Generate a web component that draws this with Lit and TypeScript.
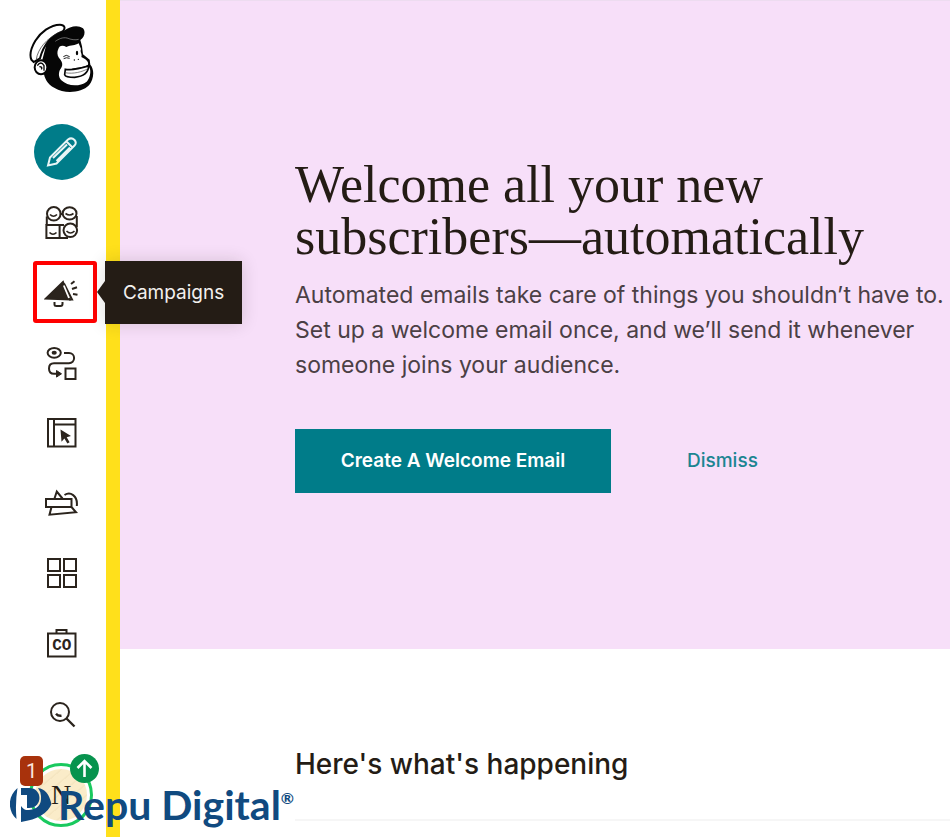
import { LitElement, html, svg, css, type TemplateResult } from "lit";
import { customElement, property, state } from "lit/decorators.js";
import { classMap } from "lit/directives/class-map.js";

interface NavEntry {
  id: string;
  label: string;
  icon: TemplateResult;
}

const entries: NavEntry[] = [
  {
    id: "audience",
    label: "Audience",
    icon: svg`
      <path d="M2.8 11.5V20M32.8 11V22M15.5 33H24M15.8 9H18.5M15.500 20H20" />
      <circle cx="9.8" cy="8.8" r="6.8" />
      <ellipse cx="25.6" cy="8.4" rx="6.9" ry="6.1" />
      <rect x="2.4" y="20" width="13.2" height="13" />
      <circle cx="26.3" cy="25.3" r="6.8" />
      <path d="M6 9.5q3.500 3.500 7 0M21.500 8.500q4 3 8 0M5.500 27.500q3.500 3.500 7 0M22.500 26q4 4 8 0" stroke-width="1.600" />`,
  },
  {
    id: "campaigns",
    label: "Campaigns",
    icon: svg`
      <path d="M2 23.500 19 7l6.500 17.500z" fill="currentColor" />
      <path d="M20 8.500 28 24.500H25" />
      <path d="M19.800 10.500 25 23" stroke="#fff" stroke-width="1.800" />
      <path d="M27 9l3.500-2.800M28 14l5-1.800M29 19l4.500.800M10.500 27v2.500q0 1.500 2 1.500h4q2 0 2-2V27" />`,
  },
  {
    id: "journeys",
    label: "Automations",
    icon: svg`
      <ellipse cx="10.200" cy="7.800" rx="6.600" ry="4.900" />
      <ellipse cx="10.200" cy="7.800" rx="1.600" ry="1" />
      <path d="M20 8H25a5 5 0 0 1 0 10.200H10q-5 0-5 5.300t5 5.300h4" />
      <path d="M12.500 25.500l5 3.300-5 3.300z" fill="currentColor" stroke-width="1" />
      <rect x="21.500" y="23.500" width="10" height="10.500" />`,
  },
  {
    id: "website",
    label: "Website",
    icon: svg`
      <path d="M4 4H31.500V31.500H4zM10 4V31.500M10 9.500H31.500" />
      <path d="M16.500 14.500l10.500 6.500-4.300 1.200 2.900 5-2.200 1.300-3-5-2.900 3.300z" fill="currentColor" stroke="none" />`,
  },
  {
    id: "content",
    label: "Content Studio",
    icon: svg`
      <path d="M2 14H27.500V22H2zM7.500 22 5.500 29.700 32 27.300 27.500 22M10.500 13.500 12.800 6.500 18.500 13.500M20.500 10C26 6.500 34 10 32.800 21" />`,
  },
  {
    id: "integrations",
    label: "Integrations",
    icon: svg`
      <path d="M4 4H16V16H4zM20 4H32V16H20zM4 20H16V32H4zM20 20H32V32H20z" />`,
  },
  {
    id: "co",
    label: "Mailchimp & Co",
    icon: svg`
      <path d="M4 8.500H31.500V31.500H4zM12.500 8.500V5H22.500V8.500" />
      <text class="co" x="17.800" y="25" text-anchor="middle">CO</text>`,
  },
  {
    id: "search",
    label: "Search",
    icon: svg`
      <circle cx="16" cy="17" r="9" />
      <path d="M22.500 23.500 30.500 31.500M12 18.700q2 2.500 5.500 2" stroke-width="2.400" />`,
  },
];

@customElement("nav-item")
class NavItem extends LitElement {
  @property({ attribute: false }) entry!: NavEntry;
  @property({ type: Boolean }) current = false;

  static styles = css`
    :host {
      display: flex;
      justify-content: center;
      position: relative;
    }
    .item {
      display: grid;
      place-items: center;
      box-sizing: border-box;
      width: 64px;
      height: 62px;
      margin: 4px 0;
      padding: 2px 6px 0 0;
      border: 4px solid transparent;
      border-radius: 3px;
      background: none;
      color: #2b241d;
      cursor: pointer;
    }
    .current {
      border-color: #ff0000;
    }
    .icon {
      display: block;
      width: 36px;
      height: 36px;
      fill: none;
      stroke: currentColor;
      stroke-width: 2;
    }
    .co {
      font: bold 16px "Liberation Mono", monospace;
      fill: currentColor;
      stroke: none;
    }
    .tip {
      position: absolute;
      z-index: 2;
      left: 105px;
      top: 4px;
      padding: 0 18px;
      background: #241c15;
      color: #f3f0ee;
      font: 19px/63px Inter, sans-serif;
      box-shadow: 0 0 16px rgba(36, 28, 21, 0.16);
    }
    .tip::before {
      content: "";
      position: absolute;
      left: -8px;
      top: 20px;
      border: solid transparent;
      border-width: 11px 8px 11px 0;
      border-right-color: #241c15;
    }
  `;

  render() {
    const { label, icon } = this.entry;
    return html`
      <button class=${classMap({ item: true, current: this.current })} aria-label=${label}>
        <svg class="icon" viewBox="0 0 36 36" aria-hidden="true">${icon}</svg>
      </button>
      ${this.current ? html`<span class="tip" role="tooltip">${label}</span>` : ""}
    `;
  }
}

@customElement("side-bar")
class SideBar extends LitElement {
  @state() private active = "campaigns";

  static styles = css`
    :host {
      display: flex;
      flex-direction: column;
      box-sizing: border-box;
      width: 120px;
      padding-right: 14px;
      background: linear-gradient(#ffe01b, #ffe01b) right / 14px 100% no-repeat #fff;
    }
    .home {
      display: block;
      height: 71px;
      padding: 23px 0 23px 28px;
    }
    .chimp {
      display: block;
      width: 67px;
      height: 70px;
    }
    .create {
      display: grid;
      place-items: center;
      align-self: center;
      width: 56px;
      height: 56px;
      margin: 7px 0 7px 18px;
      padding: 0;
      border: 0;
      border-radius: 50%;
      background: #007c89;
    }
    .pencil {
      width: 36px;
      height: 36px;
      fill: none;
      stroke: #e9f5f6;
      stroke-width: 2;
    }
    .nav {
      display: flex;
      flex-direction: column;
    }
    nav-item {
      padding-left: 24px;
    }
    .account {
      position: relative;
      display: grid;
      place-items: center;
      align-self: center;
      width: 64px;
      height: 64px;
      margin: 16px 0 8px 16px;
      padding: 0;
      border: 3px solid #19c95e;
      border-radius: 50%;
      background: #fff;
    }
    .face {
      width: 52px;
      border-radius: 50%;
      background: repeating-linear-gradient(140deg, #faecc9 0 7px, #f5e6c1 8px 9px);
      color: #241c15;
      font: 28px/52px "Liberation Serif", serif;
      text-align: center;
    }
    .count {
      position: absolute;
      left: -12px;
      top: -10px;
      width: 23px;
      border-radius: 5px;
      background: #a8320c;
      color: #fbe6df;
      font: 20px/30px Roboto, sans-serif;
      text-align: center;
    }
    .up {
      position: absolute;
      left: 38px;
      top: -12px;
      width: 29px;
      height: 29px;
    }
  `;

  render() {
    return html`
      <a class="home" href="#" aria-label="Mailchimp home">
        <svg class="chimp" viewBox="55 38 201 210" aria-hidden="true">
          <path d="M112 95C125 80 145 68 165 60 180 48 205 42 220 54 229 64 224 82 212 89L217 108 220 132 240 148 242 163C256 178 252 210 238 225 215 248 165 252 135 233 112 222 104 202 102 186L98 148Z" fill="#060606" />
          <path d="M146 116C148 105 160 103 170 110 185 104 196 106 207 99L214 116C210 126 219 131 215 140 226 146 238 152 235 163 224 170 200 171 185 175 205 180 225 173 238 170 246 180 241 204 231 214 208 231 172 227 155 210 145 200 146 184 154 174 162 162 156 151 148 143 142 134 142 123 146 116Z" fill="#fff" />
          <path d="M167 177C190 181 218 173 237 167 236 185 225 198 195 201 180 201 167 199 165 193Z" fill="#fff" stroke="#060606" stroke-width="5" />
          <path d="M166 187C192 192 218 184 233 176" fill="none" stroke="#444" stroke-width="2" />
          <path d="M161 139q8-8 19 0M162 145q8-5 18-1" fill="none" stroke="#222" stroke-width="3" />
          <ellipse cx="202" cy="128" rx="3.500" ry="7" fill="#060606" />
          <circle cx="194" cy="149" r="2" /><circle cx="206" cy="147" r="2" />
          <path d="M137 93C147 86 159 80 172 83 184 88 197 90 207 87" fill="none" stroke="#999" stroke-width="2" />
          <path d="M65 148C59 133 61 118 77 91 92 67 122 43 151 43 164 43 170 54 158 64 128 75 102 102 91 144L72 155Z" fill="#fff" stroke="#060606" stroke-width="6" />
          <path d="M80 147C84 118 108 84 156 62" fill="none" stroke="#222" stroke-width="2" />
          <ellipse cx="94" cy="171" rx="19" ry="21" fill="#fff" stroke="#060606" stroke-width="6" />
          <path d="M83 166Q94 150 103 166L103 181M89 169Q100 169 95 177" fill="none" stroke="#060606" stroke-width="4" />
        </svg>
      </a>
      <button class="create" aria-label="Create">
        <svg class="pencil" viewBox="0 0 36 36" aria-hidden="true">
          <path d="M4 31.500 6 23.500 24 5.500Q27.500 3 30.500 6 33 9 30.500 11.500L12.500 29.500ZM22.500 7.500 28.500 13.500M9 24 23 10.500M12.500 27 26 13.500" />
        </svg>
      </button>
      <nav class="nav">
        ${entries.map(
          (e) => html`<nav-item
            .entry=${e}
            ?current=${e.id === this.active}
            @click=${() => (this.active = e.id)}
          ></nav-item>`,
        )}
      </nav>
      <button class="account" aria-label="Account, 1 notification">
        <span class="face">N</span>
        <span class="count">1</span>
        <svg class="up" viewBox="0 0 29 29" aria-hidden="true">
          <circle cx="14.500" cy="14.500" r="14.500" fill="#07934e" />
          <path d="M14.500 23V7M7.500 14l7-7 7 7" fill="none" stroke="#fff" stroke-width="2.600" />
        </svg>
      </button>
    `;
  }
}

@customElement("app-root")
class AppRoot extends LitElement {
  static styles = css`
    :host {
      display: grid;
      grid-template-columns: auto 1fr;
      position: relative;
      min-height: 100vh;
      overflow: hidden;
      background: #fff;
      color: #241c15;
      font-family: Inter, sans-serif;
    }
    .hero {
      padding: 158px 0 156px 175px;
      border-top: 1px solid #eddcf0;
      background: #f7dff9;
    }
    .title {
      margin: 0;
      font: 52px/52px "Liberation Serif", serif;
    }
    .lead {
      margin: 15px 0 46px;
      color: #4b4045;
      font-size: 23px;
      line-height: 35px;
      white-space: nowrap;
    }
    .actions {
      display: flex;
      align-items: center;
      gap: 76px;
    }
    .primary {
      width: 316px;
      height: 64px;
      padding: 0;
      border: 0;
      background: #007c89;
      color: #fff;
      font: 600 19px/24px Inter, sans-serif;
    }
    .dismiss {
      color: #1c8592;
      font: 500 19px/24px Inter, sans-serif;
      text-decoration: none;
    }
    .news {
      margin-left: 175px;
      padding: 96px 0 36px;
      border-bottom: 2px solid #f6f6f6;
    }
    .subtitle {
      margin: 0;
      font: 500 28px/38px Inter, sans-serif;
    }
    .brand {
      position: absolute;
      z-index: 3;
      left: 10px;
      bottom: 8px;
      display: flex;
      align-items: center;
      gap: 6px;
      color: #104a80;
      font: bold 41px/48px Lato, sans-serif;
      white-space: nowrap;
    }
    .mark {
      width: 42px;
      height: 34px;
    }
    .reg {
      font-size: 16px;
      line-height: 0;
      vertical-align: 16px;
    }
  `;

  render() {
    return html`
      <side-bar></side-bar>
      <main>
        <section class="hero">
          <h1 class="title">Welcome all your new<br />subscribers—automatically</h1>
          <p class="lead">
            Automated emails take care of things you shouldn’t have to.<br />
            Set up a welcome email once, and we’ll send it whenever<br />
            someone joins your audience.
          </p>
          <div class="actions">
            <button class="primary">Create A Welcome Email</button>
            <a class="dismiss" href="#">Dismiss</a>
          </div>
        </section>
        <section class="news">
          <h2 class="subtitle">Here's what's happening</h2>
        </section>
      </main>
      <div class="brand">
        <svg class="mark" viewBox="0 0 42 34" aria-hidden="true">
          <path d="M7.500 0C-2 8-3 22 6.500 31Q5 15 7.500 0Z" fill="currentColor" />
          <path d="M11 0H19C33 0 33 20 19 20H17V7H11Z" fill="currentColor" />
          <path d="M11 18Q14 22 16.500 22H19Q32 21 31 8 31 4 28 0 38 1 41.500 16 36 30 11 34Z" fill="currentColor" />
        </svg>
        <span>Repu Digital<span class="reg">®</span></span>
      </div>
    `;
  }
}
